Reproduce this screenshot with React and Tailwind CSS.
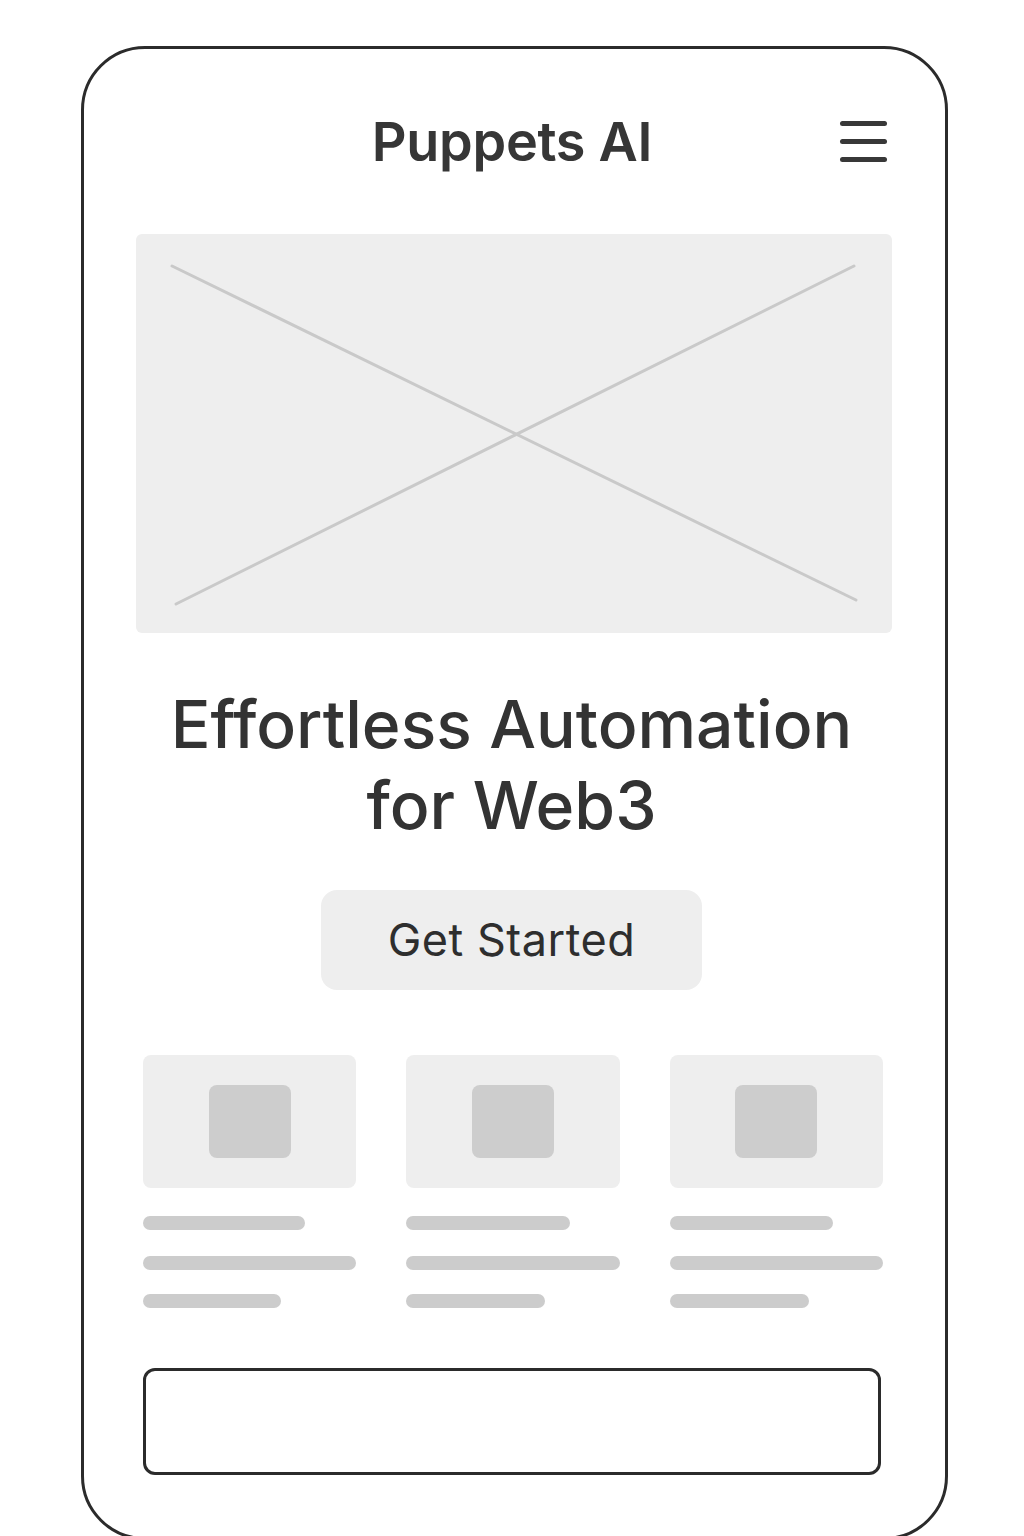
import React from "react";

const cards = [
  { a: "w-[162px]", c: "w-[138px]" },
  { a: "w-[164px]", c: "w-[139px]" },
  { a: "w-[163px]", c: "w-[139px]" },
];

function Menu() {
  return (
    <div className="flex flex-col gap-[13px] w-[47px]">
      <span className="block h-[5px] w-full rounded-full bg-[#383838]" />
      <span className="block h-[5px] w-full rounded-full bg-[#383838]" />
      <span className="block h-[5px] w-full rounded-full bg-[#383838]" />
    </div>
  );
}

export default function App() {
  return (
    <div
      className="w-full h-[1536px] bg-white overflow-hidden pt-[46px] pl-[81px]"
      style={{ fontFamily: "Inter, 'Noto Sans', sans-serif" }}
    >
      <div className="w-[867px] h-[1494px] border-[3px] border-[#2b2b2b] rounded-[64px] flex flex-col">
        {/* header */}
        <div className="h-[185px] grid grid-cols-[1fr_auto_1fr] items-center pl-[57px] pr-[58px]">
          <div />
          <h1 className="text-[54px] font-semibold text-[#363636] tracking-[-0.3px] leading-none pr-[4px]">
            Puppets AI
          </h1>
          <div className="justify-self-end">
            <Menu />
          </div>
        </div>

        {/* hero image placeholder */}
        <div className="ml-[52px] mr-[53px] h-[399px] bg-[#eeeeee] rounded-[6px]">
          <svg width="100%" height="100%" viewBox="0 0 755 399" preserveAspectRatio="none">
            <line x1="36" y1="32" x2="719" y2="366" stroke="#c9c9c9" strokeWidth="3" strokeLinecap="round" />
            <line x1="717" y1="32" x2="40" y2="370" stroke="#c9c9c9" strokeWidth="3" strokeLinecap="round" />
          </svg>
        </div>

        <h2 className="mt-[51px] pr-[6px] text-center text-[66px] leading-[81px] font-medium text-[#333333]">
          Effortless Automation
          <br />
          for Web3
        </h2>

        <div className="mt-[44px] flex justify-center pr-[6px]">
          <button className="w-[381px] h-[100px] rounded-[16px] bg-[#eeeeee] text-[45px] text-[#2e2e2e] tracking-[0.5px]">
            Get Started
          </button>
        </div>

        {/* feature cards */}
        <div className="mt-[65px] ml-[59px] mr-[62px] grid grid-cols-3 gap-x-[50px]">
          {cards.map((c, i) => (
            <div key={i} className="flex flex-col">
              <div className="h-[133px] rounded-[8px] bg-[#eeeeee] flex items-center justify-center">
                <div className="w-[82px] h-[73px] rounded-[8px] bg-[#cdcdcd]" />
              </div>
              <div className={`mt-[28px] h-[14px] rounded-full bg-[#cccccc] ${c.a}`} />
              <div className="mt-[26px] h-[14px] w-full rounded-full bg-[#cccccc]" />
              <div className={`mt-[24px] h-[14px] rounded-full bg-[#cccccc] ${c.c}`} />
            </div>
          ))}
        </div>

        {/* input */}
        <div className="mt-[60px] ml-[59px] w-[738px] h-[107px] border-[3px] border-[#2b2b2b] rounded-[12px]" />
      </div>
    </div>
  );
}
